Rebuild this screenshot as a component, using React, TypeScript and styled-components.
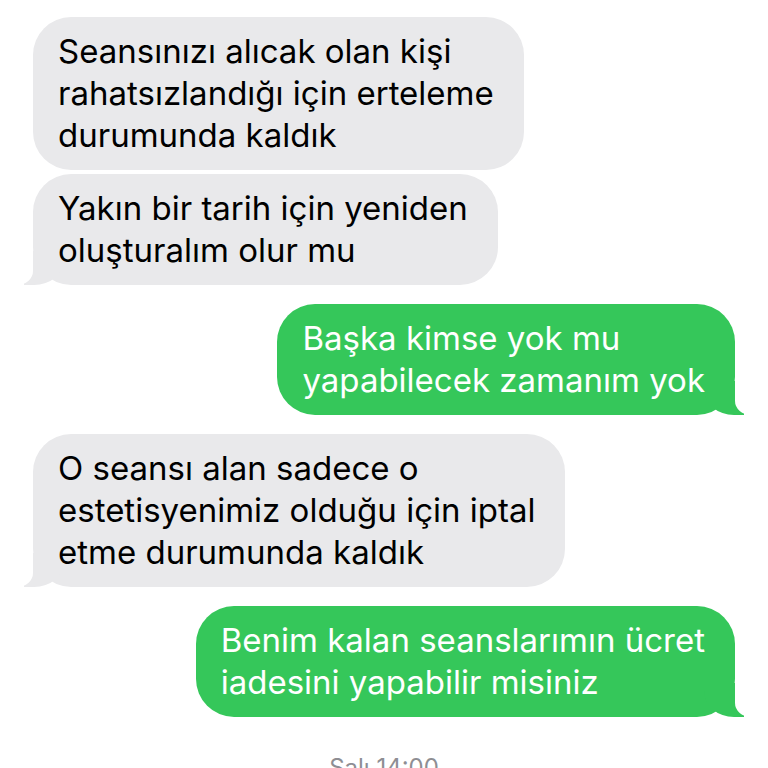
import * as React from "react";
import styled, { createGlobalStyle } from "styled-components";

const GlobalStyle = createGlobalStyle`
  html, body {
    margin: 0;
    padding: 0;
    background: #ffffff;
    overflow: hidden;
  }
`;

type Side = "in" | "out";

const messages: { side: Side; lines: string[]; gap: number }[] = [
  {
    side: "in",
    lines: ["Seansınızı alıcak olan kişi", "rahatsızlandığı için erteleme", "durumunda kaldık"],
    gap: 0,
  },
  {
    side: "in",
    lines: ["Yakın bir tarih için yeniden", "oluşturalım olur mu"],
    gap: 4,
  },
  {
    side: "out",
    lines: ["Başka kimse yok mu", "yapabilecek zamanım yok"],
    gap: 19,
  },
  {
    side: "in",
    lines: ["O seansı alan sadece o", "estetisyenimiz olduğu için iptal", "etme durumunda kaldık"],
    gap: 19,
  },
  {
    side: "out",
    lines: ["Benim kalan seanslarımın ücret", "iadesini yapabilir misiniz"],
    gap: 19,
  },
];

export default function App() {
  return (
    <>
      <GlobalStyle />
      <Thread>
        {messages.map((m, i) => {
          const next = messages[i + 1];
          const tail = !next || next.side !== m.side;
          return (
            <Row key={i} side={m.side} gap={m.gap}>
              <Bubble side={m.side} tail={tail}>
                {m.lines.map((l, j) => (
                  <Line key={j}>{l}</Line>
                ))}
              </Bubble>
            </Row>
          );
        })}
        <Stamp>Salı 14:00</Stamp>
      </Thread>
    </>
  );
}

const Thread = styled.div`
  display: flex;
  flex-direction: column;
  padding: 17px 33px 0 33px;
  font-family: Inter, "Liberation Sans", sans-serif;
`;

const Row = styled.div<{ side: Side; gap: number }>`
  display: flex;
  justify-content: ${({ side }) => (side === "in" ? "flex-start" : "flex-end")};
  margin-top: ${({ gap }) => gap}px;
`;

const Bubble = styled.div<{ side: Side; tail: boolean }>`
  position: relative;
  padding: 13px 30px 14px 25px;
  border-radius: 38px;
  background: ${({ side }) => (side === "in" ? "#e9e9eb" : "#35c75a")};
  color: ${({ side }) => (side === "in" ? "#000000" : "#ffffff")};
  font-size: 33px;
  line-height: 42px;

  ${({ tail, side }) =>
    tail &&
    `
    &::before {
      content: "";
      position: absolute;
      bottom: 0;
      ${side === "in" ? "left: -9px;" : "right: -9px;"}
      width: 40px;
      height: 34px;
      background: ${side === "in" ? "#e9e9eb" : "#35c75a"};
      ${side === "in" ? "border-bottom-right-radius: 30px 26px;" : "border-bottom-left-radius: 30px 26px;"}
    }
    &::after {
      content: "";
      position: absolute;
      bottom: 0;
      ${side === "in" ? "left: -26px;" : "right: -26px;"}
      width: 26px;
      height: 36px;
      background: #ffffff;
      ${side === "in" ? "border-bottom-right-radius: 16px 14px;" : "border-bottom-left-radius: 16px 14px;"}
    }
  `}
`;

const Line = styled.div`
  position: relative;
  z-index: 1;
  white-space: nowrap;
`;

const Stamp = styled.div`
  margin-top: 38px;
  text-align: center;
  color: #8e8e93;
  font-size: 24px;
  line-height: 26px;
`;
